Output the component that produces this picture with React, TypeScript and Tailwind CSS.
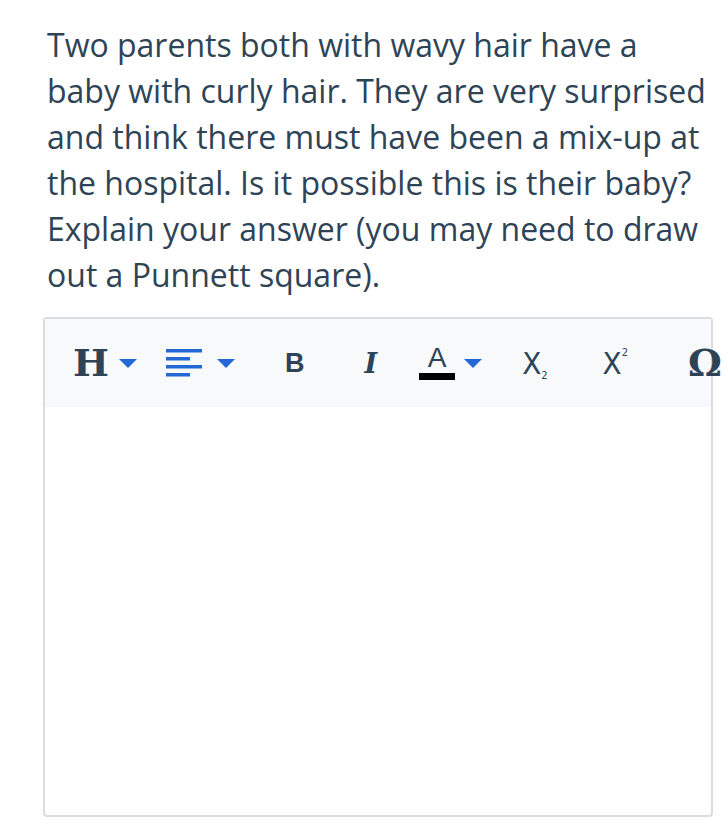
import React from "react";

const Caret = ({ className = "" }: { className?: string }) => (
  <svg width="18" height="9" viewBox="0 0 18 9" className={className}>
    <path d="M0 0 H18 L9 9 Z" fill="#2468d8" />
  </svg>
);

const AlignIcon = () => (
  <svg width="36" height="28" viewBox="0 0 36 28" className="shrink-0">
    <rect x="0" y="0" width="36" height="3.5" fill="#2468d8" />
    <rect x="0" y="8" width="24" height="3.5" fill="#2468d8" />
    <rect x="0" y="16" width="36" height="3.5" fill="#2468d8" />
    <rect x="0" y="24" width="24" height="3.5" fill="#2468d8" />
  </svg>
);

const lines = [
  "Two parents both with wavy hair have a",
  "baby with curly hair. They are very surprised",
  "and think there must have been a mix-up at",
  "the hospital. Is it possible this is their baby?",
  "Explain your answer (you may need to draw",
  "out a Punnett square).",
];

export default function App() {
  return (
    <div className="min-h-[839px] w-[724px] overflow-hidden bg-white">
      <div
        className="pl-[47px] pt-[22px] text-[32px] leading-[46px] text-[#2e4456]"
        style={{ fontFamily: "'Open Sans', sans-serif" }}
      >
        {lines.map((l) => (
          <div key={l} className="whitespace-nowrap">
            {l}
          </div>
        ))}
      </div>

      <div className="ml-[43px] mt-[19px] h-[500px] w-[670px] rounded-[4px] border-2 border-[#d9dde1]">
        <div className="flex h-[88px] items-center bg-[#f8f9fa] text-[#2e4456]">
          <span
            className="ml-[28px] w-[32px] text-[38px] leading-none font-bold"
            style={{ fontFamily: "'DejaVu Serif', serif" }}
          >
            H
          </span>
          <Caret className="ml-[14px] shrink-0" />
          <div className="ml-[29px] shrink-0">
            <AlignIcon />
          </div>
          <Caret className="ml-[15px] shrink-0" />
          <span
            className="ml-[50px] text-[27px] leading-none font-bold"
            style={{ fontFamily: "'Liberation Sans', sans-serif" }}
          >
            B
          </span>
          <span
            className="ml-[60px] text-[27px] leading-none font-bold italic"
            style={{ fontFamily: "'DejaVu Serif', serif" }}
          >
            I
          </span>
          <div className="ml-[42px] flex w-[36px] shrink-0 flex-col items-center">
            <span
              className="text-[28px] leading-[24px]"
              style={{ fontFamily: "'Liberation Sans', sans-serif" }}
            >
              A
            </span>
            <div className="mt-[3px] h-[7px] w-[36px] bg-black" />
          </div>
          <Caret className="ml-[9px] shrink-0" />
          <span
            className="ml-[40px] flex items-end leading-none"
            style={{ fontFamily: "'DejaVu Sans Condensed', 'DejaVu Sans', sans-serif" }}
          >
            <span className="text-[31px]">X</span>
            <span className="mb-[-2px] text-[11px]">2</span>
          </span>
          <span
            className="ml-[55px] flex items-start leading-none"
            style={{ fontFamily: "'DejaVu Sans Condensed', 'DejaVu Sans', sans-serif" }}
          >
            <span className="text-[31px]">X</span>
            <span className="mt-[-1px] text-[11px]">2</span>
          </span>
          <span
            className="ml-[60px] shrink-0 text-[38px] leading-none font-bold"
            style={{ fontFamily: "'DejaVu Serif', serif" }}
          >
            Ω
          </span>
        </div>
      </div>
    </div>
  );
}
